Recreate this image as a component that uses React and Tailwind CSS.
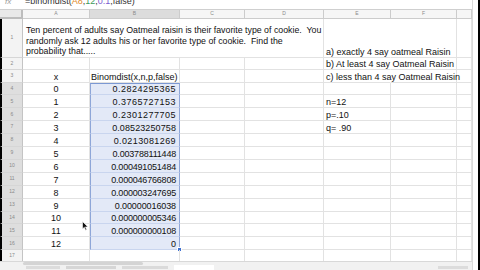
import React from 'react';

const FONT = { fontFamily: '"Liberation Sans", Arial, sans-serif' };

const GRID = 'grid grid-cols-[23px_67px_90px_65px_79px_67px_66px_1fr]';

const rows = [
  { n: 2, h: 'h-[11.6px]', e: 'b) At least 4 say Oatmeal Raisin' },
  { n: 3, h: 'h-[12.92px]', a: 'x', b: 'Binomdist(x,n,p,false)', e: 'c) less than 4 say Oatmeal Raisin', head: true },
  { n: 4, h: 'h-[12.92px]', a: '0', b: '0.2824295365', t: 'tracking-[0.5px]', sel: 'first' },
  { n: 5, h: 'h-[12.92px]', a: '1', b: '0.3765727153', t: 'tracking-[0.5px]', e: 'n=12', short: true, sel: 'mid' },
  { n: 6, h: 'h-[12.92px]', a: '2', b: '0.2301277705', t: 'tracking-[0.5px]', e: 'p=.10', short: true, sel: 'mid' },
  { n: 7, h: 'h-[12.92px]', a: '3', b: '0.08523250758', t: 'tracking-[0.1px]', e: 'q= .90', short: true, sel: 'mid' },
  { n: 8, h: 'h-[12.92px]', a: '4', b: '0.0213081269', t: 'tracking-[0.4px]', sel: 'mid' },
  { n: 9, h: 'h-[12.92px]', a: '5', b: '0.003788111448', t: 'tracking-[-0.2px]', sel: 'mid' },
  { n: 10, h: 'h-[12.92px]', a: '6', b: '0.000491051484', t: 'tracking-[-0.2px]', sel: 'mid' },
  { n: 11, h: 'h-[12.92px]', a: '7', b: '0.000046766808', t: 'tracking-[-0.2px]', sel: 'mid' },
  { n: 12, h: 'h-[12.92px]', a: '8', b: '0.000003247695', t: 'tracking-[-0.2px]', sel: 'mid' },
  { n: 13, h: 'h-[12.92px]', a: '9', b: '0.00000016038', t: 'tracking-[-0.1px]', sel: 'mid' },
  { n: 14, h: 'h-[12.92px]', a: '10', b: '0.000000005346', t: 'tracking-[-0.2px]', sel: 'mid' },
  { n: 15, h: 'h-[12.92px]', a: '11', b: '0.000000000108', t: 'tracking-[-0.2px]', sel: 'mid' },
  { n: 16, h: 'h-[12.92px]', a: '12', b: '0', sel: 'last' },
  { n: 17, h: 'h-[12.92px]' },
];

const cell = 'border-r border-b border-[#e2e2e2] flex items-end px-[2px] text-[9px] leading-[10px] text-[#111] whitespace-nowrap';

function RowHead({ n, sel }) {
  return (
    <div
      className={`border-l-2 border-l-black border-r border-b border-r-[#c4c4c4] border-b-[#d6d6d6] flex items-center justify-center text-[5px] text-[#8a8a8a] ${
        sel ? 'bg-[#dedede]' : 'bg-[#f3f3f3]'
      }`}
    >
      {n}
    </div>
  );
}

function SheetRow({ row }) {
  const selCls = row.sel
    ? `bg-[#e3e9f7] border-l border-l-[#8ea6d8] border-r-[#8ea6d8] border-b-[#c9d5ee] ${
        row.sel === 'first' ? 'border-t border-t-[#7b98d3]' : ''
      } ${row.sel === 'last' ? 'border-b-[#7b98d3]' : ''}`
    : '';
  const overflowE = row.e && !row.short;
  return (
    <div className={`${GRID} ${row.h}`}>
      <RowHead n={row.n} sel={row.sel} />
      <div className={`${cell} justify-center`}>{row.a}</div>
      <div className={`${cell} ${row.head ? 'justify-start pl-[1px]' : 'justify-end pr-[3px]'} ${row.t || ''} ${selCls} relative`}>
        {row.b}
        {row.sel === 'last' && (
          <span className="absolute right-[-3px] bottom-[-3px] w-[5px] h-[5px] bg-[#3d6fd0] border border-white" />
        )}
      </div>
      <div className={cell}></div>
      <div className={cell}></div>
      <div className={`${cell} text-[8.6px] overflow-visible relative z-10 ${overflowE ? 'border-r-transparent' : ''}`}>{row.e}</div>
      <div className={cell}></div>
      <div className={cell}></div>
    </div>
  );
}

export default function App() {
  const letters = ['A', 'B', 'C', 'D', 'E', 'F', ''];
  return (
    <div style={FONT} className="w-[480px] h-[270px] bg-white flex overflow-hidden border-r-2 border-black relative">
      <div className="flex-1 flex flex-col min-w-0">
        {/* formula bar, cut off at the top */}
        <div className="h-[10px] overflow-hidden flex items-start border-b border-[#cfcfcf] bg-white">
          <div className="w-[23px] text-[8px] leading-[9px] text-[#9a9a9a] italic -mt-[3px] pl-[5px]">fx</div>
          <div className="text-[9px] leading-[9px] -mt-[3px] pl-[2px] text-[#333] whitespace-nowrap">
            =binomdist(<span className="text-[#e08a2c]">A8</span>,<span className="text-[#3b9a5a]">12</span>,<span className="text-[#7a5ad0]">0.1</span>,false)
          </div>
        </div>

        {/* column headers */}
        <div className={`${GRID} h-[9px]`}>
          <div className="bg-[#e9e9e9] border-r-2 border-b-2 border-[#bdbdbd]"></div>
          {letters.map((l, i) => (
            <div
              key={i}
              className={`border-r border-b border-[#cccccc] flex items-center justify-center text-[5px] text-[#8a8a8a] ${
                l === 'B' ? 'bg-[#dcdcdc]' : 'bg-[#f6f6f6]'
              }`}
            >
              {l}
            </div>
          ))}
        </div>

        <div className="flex-1 overflow-hidden">
          {/* row 1: merged A1:D1 */}
          <div className={`${GRID} h-[39px]`}>
            <RowHead n={1} />
            <div className="col-span-4 border-r border-b border-[#e2e2e2] flex items-end pl-[3px] text-[8.8px] leading-[10.6px] text-[#111]">
              <div>
                <div className="whitespace-nowrap">Ten percent of adults say Oatmeal raisin is their favorite type of cookie.&nbsp; You</div>
                <div className="whitespace-nowrap">randomly ask 12 adults his or her favorite type of cookie.&nbsp; Find the</div>
                <div className="whitespace-nowrap">probability that.....</div>
              </div>
            </div>
            <div className={`${cell} text-[8.6px] overflow-visible relative z-10 border-r-transparent`}>a) exactly 4 say oatmeal Raisin</div>
            <div className={cell}></div>
            <div className={cell}></div>
          </div>
          {rows.map((r) => (
            <SheetRow key={r.n} row={r} />
          ))}
        </div>

        {/* scrollbar + sheet tabs */}
        <div className="h-[9px] bg-[#f1f1f1] border-t border-[#d8d8d8] flex flex-col">
          <div className="h-[3px] flex pl-[23px]">
            <div className="w-[120px] bg-[#d4d4d4] rounded-full"></div>
          </div>
          <div className="flex-1 flex items-center gap-[6px] pl-[26px]">
            <span className="w-[34px] h-[3px] bg-[#dcdcdc]"></span>
            <span className="w-[50px] h-[3px] bg-[#d6d6d6]"></span>
            <span className="w-[46px] h-[3px] bg-[#dadada]"></span>
            <span className="w-[40px] h-[5px] bg-white"></span>
            <span className="ml-auto mr-[4px] w-[30px] h-[3px] bg-[#dcdcdc]"></span>
          </div>
        </div>
      </div>
      <div className="w-[6px] border-l border-[#dadada] bg-white"></div>

      {/* mouse cursor */}
      <svg className="absolute left-[82px] top-[221px]" width="7" height="10" viewBox="0 0 7 10">
        <path d="M0.5 0.5 L0.5 8 L2.3 6.3 L3.6 9.2 L4.7 8.7 L3.5 5.9 L6 5.9 Z" fill="#111" stroke="#fff" strokeWidth="0.6" />
      </svg>
    </div>
  );
}
